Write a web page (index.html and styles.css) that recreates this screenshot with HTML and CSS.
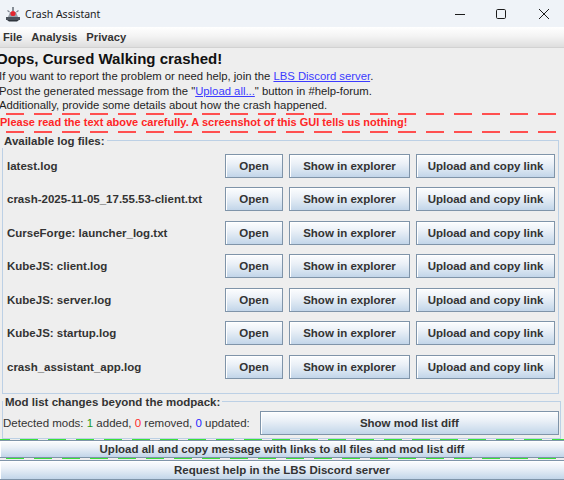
FILE: index.html
```html
<!DOCTYPE html>
<html lang="en">
<head>
<meta charset="utf-8">
<title>Crash Assistant</title>
<link rel="stylesheet" href="styles.css">
</head>
<body>
<div class="window">
  <header class="titlebar">
    <svg class="app-icon" width="16" height="16" viewBox="0 0 16 16" aria-hidden="true">
      <path d="M3 11 L5 6 H11 L13 11 Z" fill="#9aa1ab"/>
      <path d="M1 11 H15 V14 H1 Z" fill="#4b525c"/>
      <path d="M2 14 L4 15.5 H12 L14 14 Z" fill="#2f353d"/>
      <rect x="7.3" y="1" width="1.4" height="4" fill="#5a616b"/>
      <circle cx="8" cy="7.5" r="2.6" fill="#e3262f"/>
      <path d="M2.5 4.5 L4.5 6 M13.5 4.5 L11.5 6" stroke="#7b828d" stroke-width="1.2"/>
    </svg>
    <span class="title">Crash Assistant</span>
    <div class="controls">
      <svg width="12" height="12" viewBox="0 0 12 12" aria-hidden="true"><path d="M1 6.5 H11" stroke="#1c1c1c" stroke-width="1"/></svg>
      <svg width="12" height="12" viewBox="0 0 12 12" aria-hidden="true"><rect x="1.5" y="1.5" width="9" height="9" rx="1.2" fill="none" stroke="#1c1c1c" stroke-width="1"/></svg>
      <svg width="12" height="12" viewBox="0 0 12 12" aria-hidden="true"><path d="M1 1 L11 11 M11 1 L1 11" stroke="#1c1c1c" stroke-width="1"/></svg>
    </div>
  </header>

  <nav class="menubar">
    <span>File</span>
    <span>Analysis</span>
    <span>Privacy</span>
  </nav>

  <main class="content">
    <h1 class="headline">Oops, Cursed Walking crashed!</h1>
    <p class="info">If you want to report the problem or need help, join the <a href="#">LBS Discord server</a>.</p>
    <p class="info">Post the generated message from the "<a href="#">Upload all...</a>" button in #help-forum.</p>
    <p class="info">Additionally, provide some details about how the crash happened.</p>
    <p class="warning">Please read the text above carefully. A screenshot of this GUI tells us nothing!</p>

    <fieldset class="group logs">
      <legend>Available log files:</legend>
      <div class="log-row">
        <span class="log-name">latest.log</span>
        <button class="btn btn-open">Open</button>
        <button class="btn btn-show">Show in explorer</button>
        <button class="btn btn-upload">Upload and copy link</button>
      </div>
      <div class="log-row">
        <span class="log-name">crash-2025-11-05_17.55.53-client.txt</span>
        <button class="btn btn-open">Open</button>
        <button class="btn btn-show">Show in explorer</button>
        <button class="btn btn-upload">Upload and copy link</button>
      </div>
      <div class="log-row">
        <span class="log-name">CurseForge: launcher_log.txt</span>
        <button class="btn btn-open">Open</button>
        <button class="btn btn-show">Show in explorer</button>
        <button class="btn btn-upload">Upload and copy link</button>
      </div>
      <div class="log-row">
        <span class="log-name">KubeJS: client.log</span>
        <button class="btn btn-open">Open</button>
        <button class="btn btn-show">Show in explorer</button>
        <button class="btn btn-upload">Upload and copy link</button>
      </div>
      <div class="log-row">
        <span class="log-name">KubeJS: server.log</span>
        <button class="btn btn-open">Open</button>
        <button class="btn btn-show">Show in explorer</button>
        <button class="btn btn-upload">Upload and copy link</button>
      </div>
      <div class="log-row">
        <span class="log-name">KubeJS: startup.log</span>
        <button class="btn btn-open">Open</button>
        <button class="btn btn-show">Show in explorer</button>
        <button class="btn btn-upload">Upload and copy link</button>
      </div>
      <div class="log-row">
        <span class="log-name">crash_assistant_app.log</span>
        <button class="btn btn-open">Open</button>
        <button class="btn btn-show">Show in explorer</button>
        <button class="btn btn-upload">Upload and copy link</button>
      </div>
    </fieldset>

    <fieldset class="group mods">
      <legend>Mod list changes beyond the modpack:</legend>
      <div class="mods-row">
        <span class="mods-summary">Detected mods: <b class="added">1</b> added, <b class="removed">0</b> removed, <b class="updated">0</b> updated:</span>
        <button class="btn btn-diff">Show mod list diff</button>
      </div>
    </fieldset>
  </main>

  <footer class="actions">
    <div class="highlight">
      <button class="btn btn-wide">Upload all and copy message with links to all files and mod list diff</button>
    </div>
    <button class="btn btn-wide">Request help in the LBS Discord server</button>
  </footer>
</div>
</body>
</html>
```

FILE: styles.css
```css
* {
  box-sizing: border-box;
}

html, body {
  margin: 0;
  padding: 0;
}

body {
  width: 564px;
  height: 480px;
  overflow: hidden;
  background: #eeeeee;
  font-family: "Liberation Sans", Arial, sans-serif;
  color: #333333;
}

.window {
  display: flex;
  flex-direction: column;
  width: 564px;
  height: 480px;
  overflow: hidden;
}

/* ---- native title bar ---- */
.titlebar {
  display: flex;
  align-items: center;
  height: 27px;
  flex: none;
  background: #eff3f8;
  padding-left: 5px;
}

.app-icon {
  flex: none;
}

.title {
  margin-left: 4px;
  font-family: "Noto Sans", "Open Sans", sans-serif;
  font-size: 10.5px;
  color: #1b1b1b;
}

.controls {
  margin-left: auto;
  display: flex;
  align-items: center;
  gap: 31px;
  padding-right: 14px;
}

.controls svg {
  display: block;
}

.controls svg:first-child {
  margin-right: -2px;
}

/* ---- menu bar ---- */
.menubar {
  flex: none;
  display: flex;
  align-items: center;
  gap: 9px;
  height: 21px;
  padding-left: 3px;
  background: linear-gradient(#ffffff, #f4f4f4 45%, #dedede);
  border-bottom: 1px solid #d2d2d2;
  font-size: 11.2px;
  font-weight: bold;
  color: #333333;
}

/* ---- main panel ---- */
.content {
  flex: 1;
  display: flex;
  flex-direction: column;
  min-height: 0;
}

.headline {
  margin: 1px 0 0 -4px;
  font-size: 15px;
  line-height: 20px;
  font-weight: bold;
  color: #111111;
}

.info {
  margin: 0 0 0 -1px;
  font-size: 11.3px;
  line-height: 14.5px;
  color: #1e1e1e;
}

.info a {
  color: #3b3bff;
  text-decoration: underline;
}

.warning {
  margin: 0;
  padding: 3px 0 4px 0;
  font-size: 11px;
  line-height: 13px;
  font-weight: bold;
  color: #ff2626;
  background:
    linear-gradient(90deg, #ff4f4f 0 18px, transparent 18px) 6px 0 / 28px 2px repeat-x,
    linear-gradient(90deg, #ff4f4f 0 18px, transparent 18px) 6px 100% / 28px 2px repeat-x;
}

/* ---- titled groups ---- */
.group {
  margin: 0 5px 0 2px;
  padding: 0;
  border: 1px solid #bcd0e5;
  min-width: 0;
}

.group legend {
  margin-left: 0;
  padding: 0 2px;
  font-size: 11.5px;
  line-height: 14px;
  font-weight: bold;
  color: #333333;
}

.logs {
  margin-top: 1px;
  padding: 6px 3px 14px 3px;
  display: flex;
  flex-direction: column;
  gap: 9.5px;
}

.logs legend {
  margin-left: -4px;
}

.log-row {
  display: flex;
  align-items: center;
  gap: 6px;
  height: 24px;
}

.log-name {
  flex: 1;
  padding-left: 1px;
  font-size: 11.5px;
  font-weight: bold;
  color: #333333;
  white-space: nowrap;
}

/* ---- Metal style buttons ---- */
.btn {
  height: 24px;
  padding: 0;
  border: 1px solid #7f94a9;
  border-radius: 0;
  background: linear-gradient(#fcfdfe, #eaf0f7 40%, #d3e1ef 75%, #c2d5e9);
  box-shadow: inset 1px 1px 0 #ffffff;
  font-family: "Liberation Sans", Arial, sans-serif;
  font-size: 11.5px;
  font-weight: bold;
  color: #333333;
  white-space: nowrap;
}

.btn-open {
  width: 58px;
}

.btn-show {
  width: 121px;
}

.btn-upload {
  width: 139px;
}

.mods {
  margin: 1px 3px 0 2px;
  padding: 2px 1px 3px 0;
}

.mods-row {
  display: flex;
  align-items: center;
  gap: 10px;
  height: 24px;
}

.mods-summary {
  flex: none;
  font-size: 11.5px;
  color: #333333;
  white-space: nowrap;
}

.mods-summary b {
  font-weight: normal;
}

.added {
  color: #1e9a1e;
}

.removed {
  color: #ff2a2a;
}

.updated {
  color: #2626ff;
}

.btn-diff {
  flex: 1;
  height: 24px;
}

/* ---- bottom actions ---- */
.actions {
  flex: none;
  display: flex;
  flex-direction: column;
  gap: 1px;
  padding-top: 2px;
}

.highlight {
  padding: 1px 0;
  background:
    linear-gradient(90deg, #39e039 0 18px, transparent 18px) 20px 0 / 28px 2px repeat-x,
    linear-gradient(90deg, #39e039 0 18px, transparent 18px) 6px 100% / 28px 2px repeat-x;
}

.btn-wide {
  display: block;
  width: 100%;
  height: 18px;
  border-left: 0;
  border-right: 0;
}

.actions > .btn-wide {
  height: 20px;
}
```
